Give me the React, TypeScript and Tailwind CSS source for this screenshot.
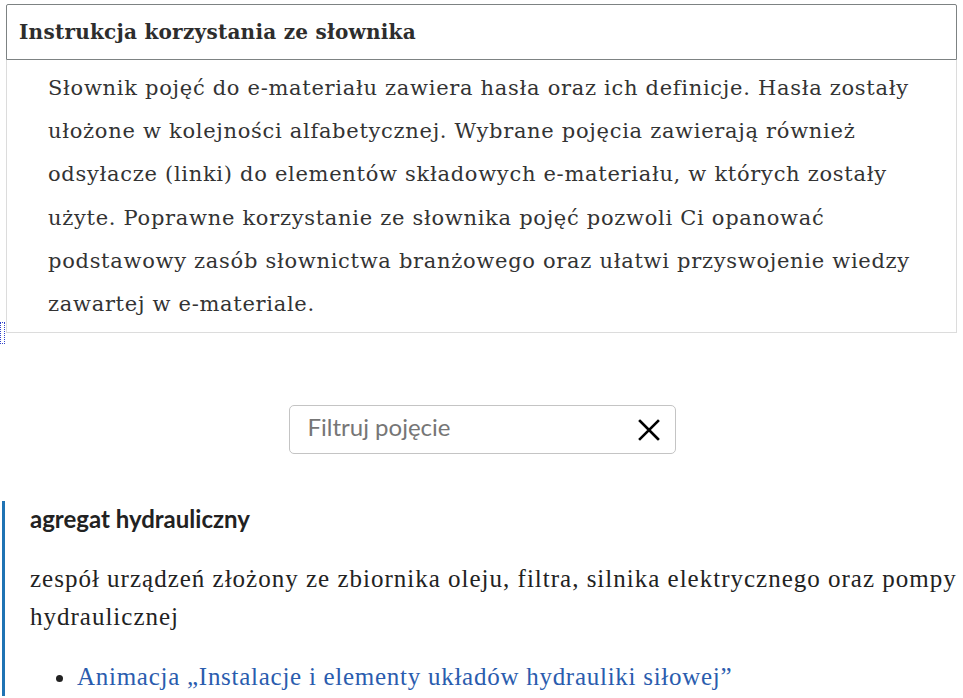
import React from "react";

export default function App() {
  const slab = { fontFamily: '"DejaVu Serif", "Liberation Serif", serif' };
  const lora = { fontFamily: '"Liberation Serif", serif' };
  const lato = { fontFamily: 'Lato, "Open Sans", sans-serif' };
  return (
    <div className="relative w-[963px] h-[698px] overflow-hidden bg-white">
      <div className="pt-[4px] px-[6px] w-[963px]">
        <div
          className="h-[56px] border border-[#7d8283] rounded-t-[2px] flex items-center pl-[12px] text-[20px] tracking-[0.25px] font-bold text-[#2d2d2d]"
          style={slab}
        >
          Instrukcja korzystania ze słownika
        </div>
        <div
          className="border border-t-0 border-[#dcdcdc] pl-[41px] pt-[7px] pb-[6px] text-[21px] tracking-[0.7px] leading-[43.2px] text-[#333] whitespace-nowrap"
          style={slab}
        >
          Słownik pojęć do e-materiału zawiera hasła oraz ich definicje. Hasła zostały
          <br />
          ułożone w kolejności alfabetycznej. Wybrane pojęcia zawierają również
          <br />
          odsyłacze (linki) do elementów składowych e-materiału, w których zostały
          <br />
          użyte. Poprawne korzystanie ze słownika pojęć pozwoli Ci opanować
          <br />
          podstawowy zasób słownictwa branżowego oraz ułatwi przyswojenie wiedzy
          <br />
          zawartej w e-materiale.
        </div>
      </div>

      <div className="absolute left-0 top-[322px] w-[5px] h-[22px] border border-dotted border-[#3344cc]" />

      <div className="mt-[72px] flex justify-center pl-[1px]">
        <div className="w-[387px] h-[49px] border border-[#c4c4c4] rounded-[5px] flex items-center justify-between pl-[18px] pr-[14px]">
          <span className="text-[24px] text-[#767676] -mt-[5px]" style={lato}>
            Filtruj pojęcie
          </span>
          <svg width="22" height="22" viewBox="0 0 22 22" className="mr-[1px]">
            <path d="M2 2 L20 20 M20 2 L2 20" stroke="#000" strokeWidth="2.6" strokeLinecap="square" />
          </svg>
        </div>
      </div>

      <div className="mt-[47px] ml-[2px] border-l-[3px] border-[#1f73b4] pl-[25px] pt-[4px]">
        <div className="text-[24px] font-bold text-[#222] leading-[28px]" style={lato}>
          agregat hydrauliczny
        </div>
        <div
          className="mt-[27px] text-[25px] tracking-[1px] leading-[38px] text-[#222] whitespace-nowrap"
          style={lora}
        >
          zespół urządzeń złożony ze zbiornika oleju, filtra, silnika elektrycznego oraz pompy
          <br />
          hydraulicznej
        </div>
        <ul
          className="mt-[22px] list-disc pl-[47px] text-[25px] tracking-[0.73px] leading-[38px] text-[#222]"
          style={lora}
        >
          <li>
            <a className="text-[#2a5cae]">Animacja „Instalacje i elementy układów hydrauliki siłowej”</a>
          </li>
        </ul>
      </div>
    </div>
  );
}
